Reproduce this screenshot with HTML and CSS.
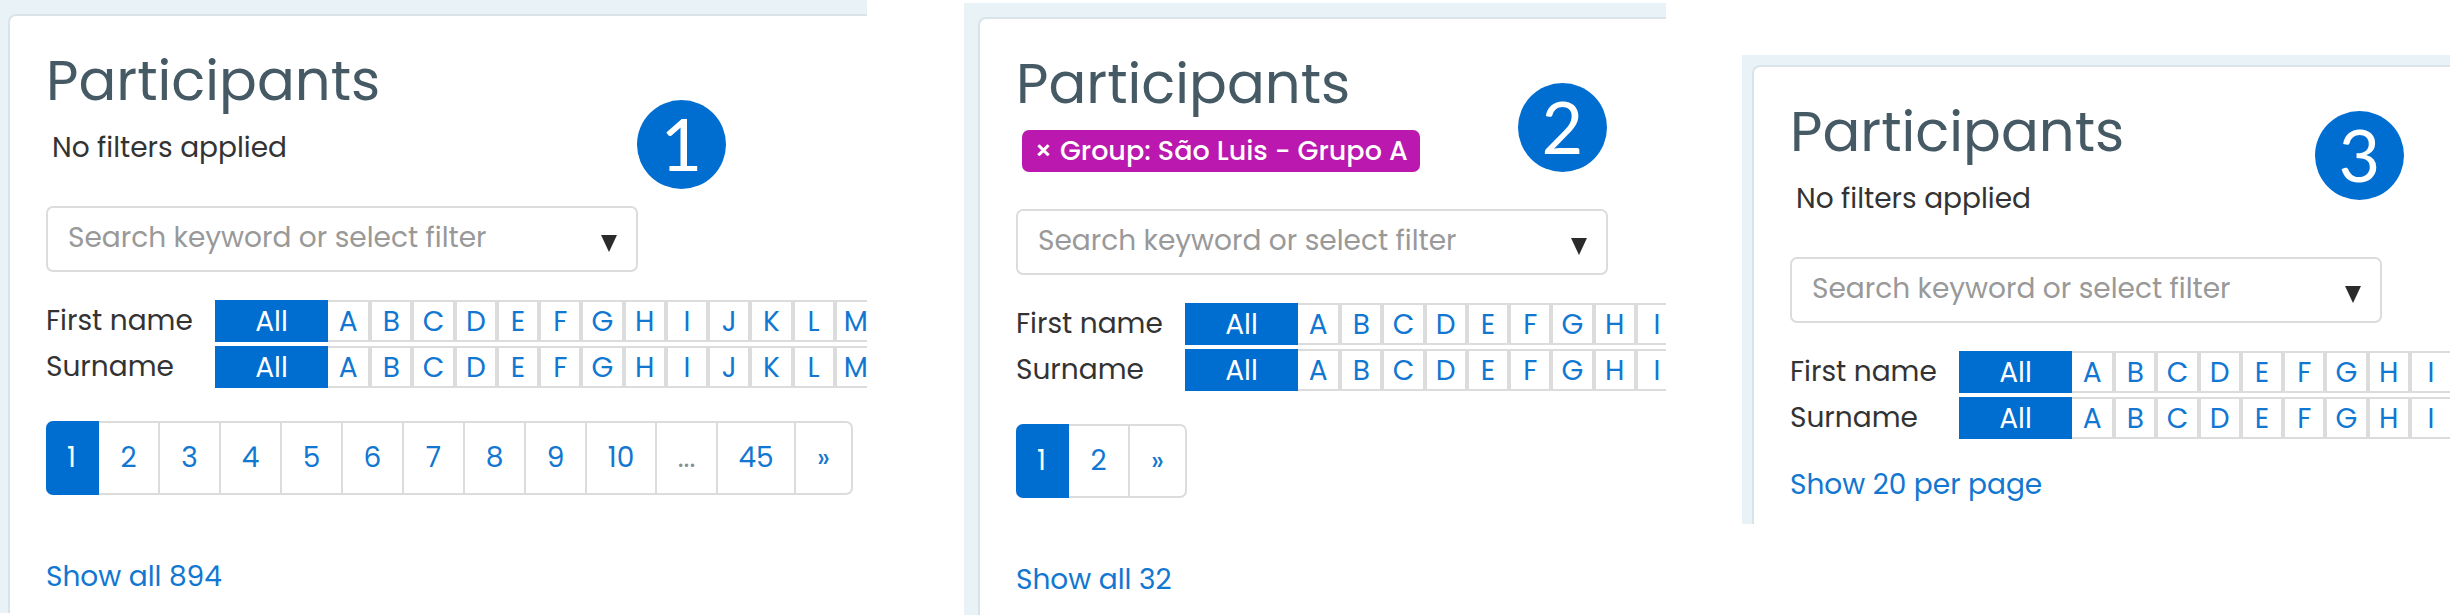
FILE: index.html
```html
<!DOCTYPE html>
<html lang="en">

<head>
    <meta charset="UTF-8">
    <meta name="viewport" content="width=device-width, initial-scale=1.0">
    <title>Participants</title>
    <link rel="stylesheet" href="styles.css">
</head>

<body>
    <main class="panels">
        <!-- 1: first page of everybody -->
        <section class="panel panel-all">
            <span class="step">1</span>
            <div class="card">
                <h2>Participants</h2>
                <div class="filters">No filters applied</div>
                <div class="search">
                    <input type="text" placeholder="Search keyword or select filter" aria-label="Search keyword or select filter">
                    <svg class="arrow" viewBox="0 0 16 17"><path d="M0 0h16L8 17z" /></svg>
                </div>
                <div class="initials">
                    <span class="label">First name</span>
                    <a class="all" href="#">All</a>
                    <div class="letters">
                        <a href="#">A</a><a href="#">B</a><a href="#">C</a><a href="#">D</a><a href="#">E</a><a href="#">F</a><a href="#">G</a><a href="#">H</a><a href="#">I</a><a href="#">J</a><a href="#">K</a><a href="#">L</a><a href="#">M</a>
                    </div>
                </div>
                <div class="initials">
                    <span class="label">Surname</span>
                    <a class="all" href="#">All</a>
                    <div class="letters">
                        <a href="#">A</a><a href="#">B</a><a href="#">C</a><a href="#">D</a><a href="#">E</a><a href="#">F</a><a href="#">G</a><a href="#">H</a><a href="#">I</a><a href="#">J</a><a href="#">K</a><a href="#">L</a><a href="#">M</a>
                    </div>
                </div>
                <nav class="pagination">
                    <a class="active" href="#">1</a>
                    <a href="#">2</a>
                    <a href="#">3</a>
                    <a href="#">4</a>
                    <a href="#">5</a>
                    <a href="#">6</a>
                    <a href="#">7</a>
                    <a href="#">8</a>
                    <a href="#">9</a>
                    <a class="ten" href="#">10</a>
                    <span>...</span>
                    <a class="last" href="#">45</a>
                    <a class="next" href="#">»</a>
                </nav>
                <a class="show" href="#">Show all 894</a>
            </div>
        </section>

        <!-- 2: filtered by group -->
        <section class="panel panel-group">
            <span class="step">2</span>
            <div class="card">
                <h2>Participants</h2>
                <div class="filters">
                    <button class="tag" type="button">× Group: São Luis - Grupo A</button>
                </div>
                <div class="search">
                    <input type="text" placeholder="Search keyword or select filter" aria-label="Search keyword or select filter">
                    <svg class="arrow" viewBox="0 0 16 17"><path d="M0 0h16L8 17z" /></svg>
                </div>
                <div class="initials">
                    <span class="label">First name</span>
                    <a class="all" href="#">All</a>
                    <div class="letters short">
                        <a href="#">A</a><a href="#">B</a><a href="#">C</a><a href="#">D</a><a href="#">E</a><a href="#">F</a><a href="#">G</a><a href="#">H</a><a href="#">I</a>
                    </div>
                </div>
                <div class="initials">
                    <span class="label">Surname</span>
                    <a class="all" href="#">All</a>
                    <div class="letters short">
                        <a href="#">A</a><a href="#">B</a><a href="#">C</a><a href="#">D</a><a href="#">E</a><a href="#">F</a><a href="#">G</a><a href="#">H</a><a href="#">I</a>
                    </div>
                </div>
                <nav class="pagination">
                    <a class="active" href="#">1</a>
                    <a href="#">2</a>
                    <a class="next" href="#">»</a>
                </nav>
                <a class="show" href="#">Show all 32</a>
            </div>
        </section>

        <!-- 3: everybody on one page -->
        <section class="panel panel-full">
            <span class="step">3</span>
            <div class="card">
                <h2>Participants</h2>
                <div class="filters">No filters applied</div>
                <div class="search">
                    <input type="text" placeholder="Search keyword or select filter" aria-label="Search keyword or select filter">
                    <svg class="arrow" viewBox="0 0 16 17"><path d="M0 0h16L8 17z" /></svg>
                </div>
                <div class="initials">
                    <span class="label">First name</span>
                    <a class="all" href="#">All</a>
                    <div class="letters short">
                        <a href="#">A</a><a href="#">B</a><a href="#">C</a><a href="#">D</a><a href="#">E</a><a href="#">F</a><a href="#">G</a><a href="#">H</a><a href="#">I</a>
                    </div>
                </div>
                <div class="initials">
                    <span class="label">Surname</span>
                    <a class="all" href="#">All</a>
                    <div class="letters short">
                        <a href="#">A</a><a href="#">B</a><a href="#">C</a><a href="#">D</a><a href="#">E</a><a href="#">F</a><a href="#">G</a><a href="#">H</a><a href="#">I</a>
                    </div>
                </div>
                <a class="show" href="#">Show 20 per page</a>
            </div>
        </section>
    </main>
</body>

</html>
```
FILE: styles.css
```css
* {
    padding: 0;
    margin: 0;
    box-sizing: border-box;
}

body {
    background: #fff;
    color: #333;
    font-family: Poppins, Inter, sans-serif;
    font-size: 28px;
    line-height: 42px;
}

a {
    color: #1177d1;
    text-decoration: none;
}

.panels {
    display: grid;
    grid-template-columns: 964fr 778fr 708fr;
    align-items: start;
}

.panel {
    position: relative;
    min-width: 0;
    overflow: hidden;
    background: #e9f2f7;
}

.panel-all {
    margin-right: 97px;
    padding: 14px 0 0 8px;
}

.panel-group {
    margin: 3px 76px 0 0;
    padding: 14px 0 0 14px;
}

.panel-full {
    margin-top: 55px;
    padding: 10px 0 0 10px;
}

.card {
    padding: 30px 0 15px 36px;
    background: #fff;
    border-top: 2px solid #d8e4e8;
    border-left: 2px solid #d8e4e8;
    border-top-left-radius: 8px;
}

h2 {
    color: #455a64;
    font-size: 56px;
    font-weight: 400;
    line-height: 70px;
}

.filters {
    height: 42px;
    margin: 11px 0 37px;
    padding-left: 6px;
}

.tag {
    display: block;
    height: 42px;
    padding: 0 12px;
    border: 0;
    border-radius: 7px;
    background: #ba18ae;
    color: #fff;
    font: inherit;
    font-size: 27px;
    font-weight: 500;
    white-space: nowrap;
}

.search {
    position: relative;
    width: 592px;
    margin-bottom: 28px;
}

.search input {
    display: block;
    width: 100%;
    height: 66px;
    padding: 0 60px 2px 20px;
    border: 2px solid #dcdcdc;
    border-radius: 7px;
    background: #fff;
    color: #333;
    font: inherit;
}

.search input::placeholder {
    color: #999;
    opacity: 1;
}

.arrow {
    position: absolute;
    top: 29px;
    right: 21px;
    width: 16px;
    height: 17px;
    fill: #2b2b2b;
}

.initials {
    display: flex;
    height: 42px;
    margin-bottom: 4px;
}

.label {
    flex: none;
    width: 169px;
}

.all {
    flex: none;
    width: 113px;
    background: #006dd1;
    color: #fff;
    line-height: 44px;
    text-align: center;
}

.letters {
    display: grid;
    flex: none;
    grid-auto-flow: column;
    grid-auto-columns: 1fr;
    width: 549px;
}

.letters.short {
    width: 380px;
}

.letters a {
    height: 42px;
    border: 2px solid #dcdcdc;
    line-height: 40px;
    text-align: center;
}

.letters a:first-child {
    border-left: 0;
}

.pagination {
    display: flex;
    margin: 33px 0 61px;
}

.pagination a,
.pagination span {
    width: 61px;
    height: 74px;
    border: 2px solid #dcdcdc;
    border-left: 0;
    line-height: 70px;
    text-align: center;
}

.pagination span {
    color: #868e96;
}

.pagination .active {
    width: 53px;
    border-color: #006dd1;
    border-radius: 7px 0 0 7px;
    background: #006dd1;
    color: #fff;
}

.pagination .ten {
    width: 70px;
}

.pagination .last {
    width: 78px;
}

.pagination .next {
    width: 57px;
    border-radius: 0 7px 7px 0;
}

.show {
    display: block;
}

.panel-full .show {
    margin: 25px 0 3px;
}

/* numbered markers */
.step {
    position: absolute;
    top: 100px;
    left: 637px;
    width: 89px;
    height: 89px;
    border-radius: 50%;
    background: #006dd1;
    color: #fff;
    font-family: Lato, sans-serif;
    font-size: 72px;
    line-height: 86px;
    text-align: center;
}

.panel-group .step {
    top: 80px;
    left: 554px;
}

.panel-full .step {
    top: 56px;
    left: 573px;
}
```
